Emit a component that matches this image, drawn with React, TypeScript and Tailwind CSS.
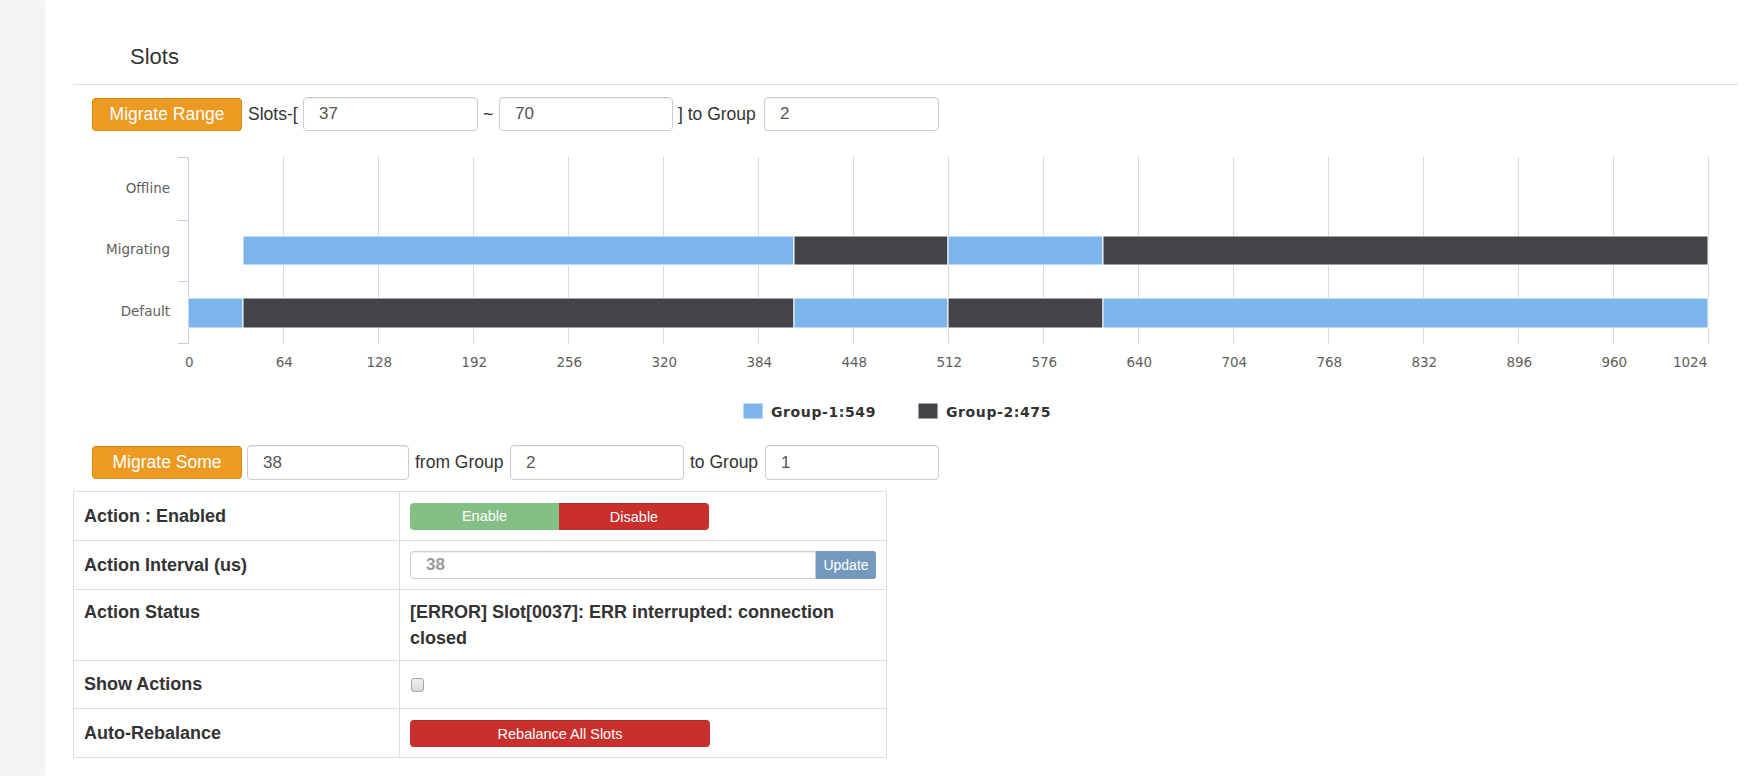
import React from "react";

const BLUE = "#7cb5ec";
const DARK = "#434348";
const X = (v: number) => 115.3 + v * 1.484375;

type Seg = [number, number, string];
const segMig: Seg[] = [
  [37, 408, BLUE],
  [408, 512, DARK],
  [512, 616, BLUE],
  [616, 1024, DARK],
];
const segDef: Seg[] = [
  [0, 37, BLUE],
  [37, 408, DARK],
  [408, 512, BLUE],
  [512, 616, DARK],
  [616, 1024, BLUE],
];

function Chart() {
  const ticks = Array.from({ length: 17 }, (_, i) => i * 64);
  const font = "'DejaVu Sans', Verdana, sans-serif";
  const bar = (segs: Seg[], y: number, h: number, key: string) =>
    segs.map(([a, b, c], i) => {
      const x0 = Math.round(X(a));
      const x1 = Math.round(X(b));
      return (
        <rect
          key={key + i}
          x={x0}
          y={y}
          width={x1 - x0}
          height={h}
          fill={c}
          stroke="#ffffff"
          strokeWidth={1}
        />
      );
    });
  return (
    <svg width="1665" height="314" className="block">
      {ticks.slice(1).map((t) => {
        const x = Math.round(X(t)) + 0.5;
        return <line key={t} x1={x} x2={x} y1={26} y2={213} stroke="#D8D8D8" strokeWidth={1} />;
      })}
      <line x1={115.5} x2={115.5} y1={26} y2={213} stroke="#C0D0E0" strokeWidth={1} />
      {[26.5, 89.5, 150.5, 212.5].map((y) => (
        <line key={y} x1={105} x2={115.5} y1={y} y2={y} stroke="#C0D0E0" strokeWidth={1} />
      ))}
      {bar(segMig, 105, 29, "m")}
      {bar(segDef, 167, 30, "d")}
      <g fontFamily={font} fontSize={13.5} fill="#606060">
        <text x={97} y={62} textAnchor="end">Offline</text>
        <text x={97} y={123} textAnchor="end">Migrating</text>
        <text x={97} y={185} textAnchor="end">Default</text>
        {ticks.map((t) => (
          <text
            key={t}
            x={t === 1024 ? X(t) - 1 : X(t) + 1}
            y={236}
            textAnchor={t === 1024 ? "end" : "middle"}
          >
            {t}
          </text>
        ))}
      </g>
      <g fontFamily={font} fontSize={14} fontWeight="bold" fill="#333333" letterSpacing={0.6}>
        <rect x={670} y={272} width={20} height={16} fill={BLUE} stroke="#ffffff" strokeWidth={1} />
        <text x={698} y={286}>Group-1:549</text>
        <rect x={845} y={272} width={20} height={16} fill={DARK} stroke="#ffffff" strokeWidth={1} />
        <text x={873} y={286}>Group-2:475</text>
      </g>
    </svg>
  );
}

function TextInput({ value, w, h = "h-[34px]" }: { value: string; w: string; h?: string }) {
  return (
    <input
      readOnly
      defaultValue={value}
      className={`${w} ${h} shrink-0 rounded-[4px] border border-[#ccc] bg-white px-[15px] text-[17px] text-[#555] shadow-[inset_0_1px_1px_rgba(0,0,0,0.075)] outline-none`}
    />
  );
}

function OrangeButton({ children }: { children: React.ReactNode }) {
  return (
    <button className="h-[33px] w-[150px] shrink-0 rounded-[4px] border border-[#dc8b18] border-t-[#d0820f] bg-[#ed9a22] text-[17.5px] text-white">
      {children}
    </button>
  );
}

function Row({
  label,
  h,
  top,
  children,
}: {
  label: string;
  h: string;
  top?: boolean;
  children: React.ReactNode;
}) {
  return (
    <div className={`flex ${h} border-b border-[#ddd]`}>
      <div
        className={`flex w-[326px] shrink-0 border-r border-[#ddd] pl-[10px] ${
          top ? "items-start pt-[9px]" : "items-center pb-[1px]"
        }`}
      >
        {label}
      </div>
      <div className={`flex flex-1 pl-[10px] pr-[10px] ${top ? "items-start pt-[9px]" : "items-center"}`}>
        {children}
      </div>
    </div>
  );
}

export default function App() {
  return (
    <div className="flex min-h-screen bg-white font-['Liberation_Sans',Arial,sans-serif] text-[#333]">
      <aside className="w-[42px] shrink-0 bg-[#f5f5f5] shadow-[2px_0_4px_rgba(0,0,0,0.08)]" />
      <main className="flex-1 pl-[31px] pr-[7px]">
        <div className="h-[85px] border-b border-[#ddd] pl-[57px] pt-[46px] text-[22px] leading-[22px] text-[#333]">
          Slots
        </div>

        <div className="mt-[12px] flex h-[34px] items-center pl-[19px] text-[17.5px] text-[#333]">
          <OrangeButton>Migrate Range</OrangeButton>
          <span className="ml-[6px] w-[50px] shrink-0 whitespace-nowrap">Slots-[</span>
          <div className="ml-[5px]">
            <TextInput value="37" w="w-[175px]" />
          </div>
          <span className="ml-[5px] w-[11px] shrink-0">~</span>
          <div className="ml-[5px]">
            <TextInput value="70" w="w-[174px]" />
          </div>
          <span className="ml-[5px] w-[81px] shrink-0 whitespace-nowrap">] to Group</span>
          <div className="ml-[5px]">
            <TextInput value="2" w="w-[175px]" />
          </div>
        </div>

        <Chart />

        <div className="flex h-[35px] items-center pl-[19px] text-[17.5px] text-[#333]">
          <OrangeButton>Migrate Some</OrangeButton>
          <div className="ml-[5px]">
            <TextInput value="38" w="w-[162px]" h="h-[35px]" />
          </div>
          <span className="ml-[6px] w-[89px] shrink-0 whitespace-nowrap">from Group</span>
          <div className="ml-[6px]">
            <TextInput value="2" w="w-[174px]" h="h-[35px]" />
          </div>
          <span className="ml-[6px] w-[69px] shrink-0 whitespace-nowrap">to Group</span>
          <div className="ml-[6px]">
            <TextInput value="1" w="w-[174px]" h="h-[35px]" />
          </div>
        </div>

        <div className="mt-[11px] w-[814px] border-l border-r border-t border-[#ddd] text-[18px] font-bold leading-[26px] text-[#333]">
          <Row label="Action : Enabled" h="h-[49px]">
            <div className="flex h-[27px] w-[299px] font-normal">
              <button className="h-full w-[149px] rounded-l-[4px] bg-[#84bf86] text-[14.5px] text-white">
                Enable
              </button>
              <button className="h-full w-[150px] rounded-r-[4px] border-t border-[#ae2a26] bg-[#c9302c] text-[14.5px] text-white">
                Disable
              </button>
            </div>
          </Row>
          <Row label="Action Interval (us)" h="h-[49px]">
            <div className="flex h-[28px]">
              <input
                readOnly
                defaultValue="38"
                className="h-[28px] w-[406px] rounded-l-[4px] border border-[#ccc] bg-white pl-[15px] text-[17px] font-bold text-[#999] shadow-[inset_0_1px_1px_rgba(0,0,0,0.075)] outline-none"
              />
              <button className="h-[28px] w-[60px] rounded-r-[3px] bg-[#7399bc] text-[14px] font-normal text-white">
                Update
              </button>
            </div>
          </Row>
          <Row label="Action Status" h="h-[71px]" top>
            <span>[ERROR] Slot[0037]: ERR interrupted: connection closed</span>
          </Row>
          <Row label="Show Actions" h="h-[48px]">
            <input
              type="checkbox"
              className="m-0 ml-[1px] h-[14px] w-[13px] appearance-none rounded-[3px] border border-[#a6a6a6] bg-gradient-to-b from-[#f0f0f0] to-[#d8d8d8]"
            />
          </Row>
          <Row label="Auto-Rebalance" h="h-[49px]">
            <button className="h-[27px] w-[300px] rounded-[4px] border-t border-[#ae2a26] bg-[#c9302c] text-[14.5px] font-normal text-white">
              Rebalance All Slots
            </button>
          </Row>
        </div>
      </main>
    </div>
  );
}
